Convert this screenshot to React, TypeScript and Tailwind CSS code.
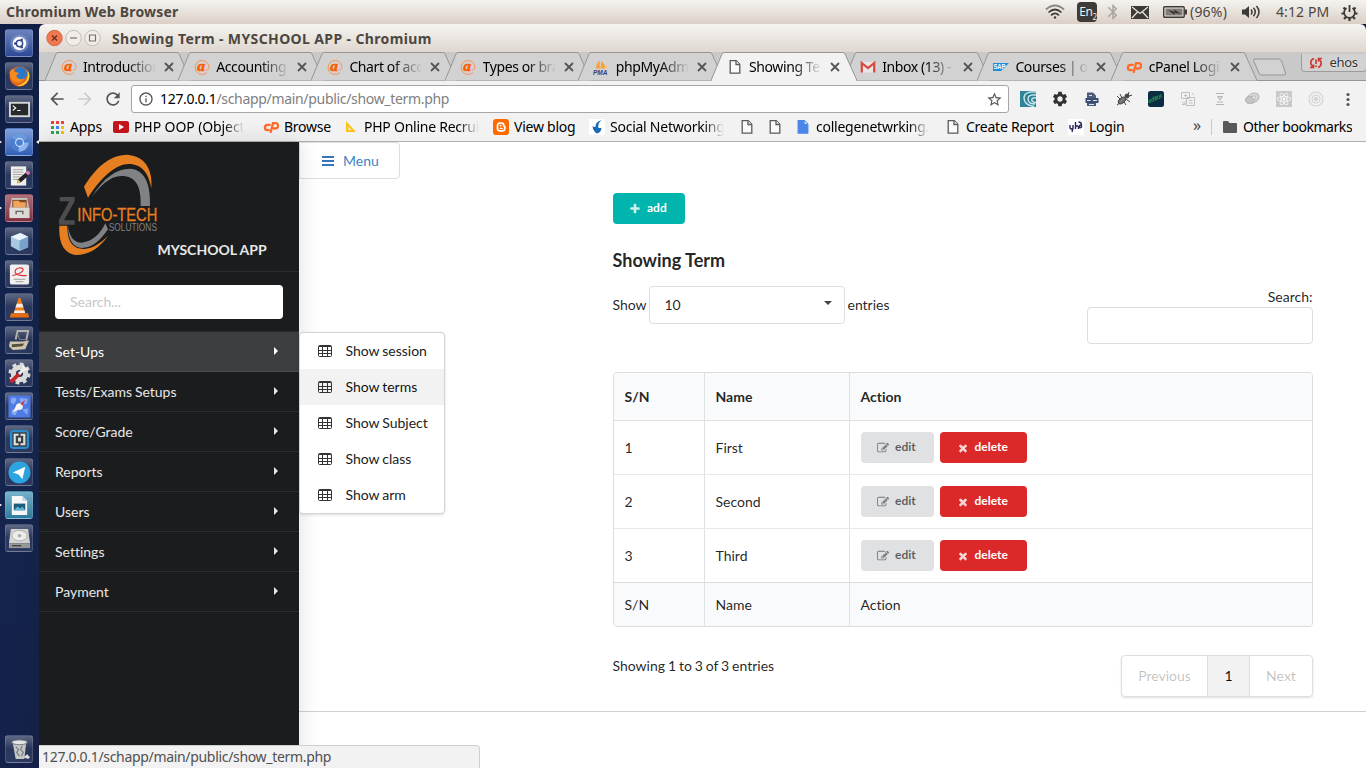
import React from "react";
import { FaReact } from "react-icons/fa";
import { MdBluetooth, MdStarBorder, MdRefresh, MdArrowBack, MdArrowForward, MdSettings, MdInfoOutline } from "react-icons/md";

const uiFont = "font-['Noto_Sans','Open_Sans',sans-serif]";

/* ---------- small icons ---------- */

function Fa({ d, className }: { d: string; className: string }) {
  return (
    <svg viewBox="0 0 1792 1792" fill="currentColor" className={className}>
      <path d={d} />
    </svg>
  );
}
const PLUS =
  "M1600 736v192q0 40-28 68t-68 28h-416v416q0 40-28 68t-68 28h-192q-40 0-68-28t-28-68v-416h-416q-40 0-68-28t-28-68v-192q0-40 28-68t68-28h416v-416q0-40 28-68t68-28h192q40 0 68 28t28 68v416h416q40 0 68 28t28 68z";
const CLOSE =
  "M1490 1322q0 40-28 68l-136 136q-28 28-68 28t-68-28l-294-294-294 294q-28 28-68 28t-68-28l-136-136q-28-28-28-68t28-68l294-294-294-294q-28-28-28-68t28-68l136-136q28-28 68-28t68 28l294 294 294-294q28-28 68-28t68 28l136 136q28 28 28 68t-28 68l-294 294 294 294q28 28 28 68z";
const EDIT =
  "M888 1184l116-116-152-152-116 116v56h96v96h56zm440-720q-16-16-33 1l-350 350q-17 17-1 33t33-1l350-350q17-17 1-33zm80 594v190q0 119-84.5 203.5t-203.5 84.5h-832q-119 0-203.5-84.5t-84.5-203.5v-832q0-119 84.5-203.5t203.5-84.5h832q63 0 117 25 15 7 18 23 3 17-9 29l-49 49q-14 14-32 8-23-6-45-6h-832q-66 0-113 47t-47 113v832q0 66 47 113t113 47h832q66 0 113-47t47-113v-126q0-13 9-22l64-64q15-15 35-7t20 29zm-96-738l288 288-672 672h-288v-288zm444 132l-92 92-288-288 92-92q28-28 68-28t68 28l152 152q28 28 28 68t-28 68z";

function TableIcon() {
  return (
    <svg viewBox="0 0 14 12" className="h-3 w-3.5 shrink-0" fill="none" stroke="#333" strokeWidth="1">
      <rect x=".5" y=".5" width="13" height="11" rx="1" />
      <path d="M1 1.500h12M1 5.500h12M1 8.500h12M4.500 2v9.500M9.500 2v9.500" />
    </svg>
  );
}

function AtIcon() {
  return (
    <svg viewBox="0 0 16 16" className="h-4 w-4">
      <path d="M12.800 13.600A7 7 0 1 1 15 7.500c.1 2.200-1.200 3.900-3.200 3.500" fill="none" stroke="#f7935a" strokeWidth="1" />
      <text x="3.300" y="11.700" fontFamily="Liberation Serif, serif" fontStyle="italic" fontWeight="700" fontSize="15.500" fill="#ff5c00" stroke="#ff5c00" strokeWidth=".6">a</text>
    </svg>
  );
}

function CpIcon() {
  return (
    <svg viewBox="0 0 16 12" className="h-3 w-4" fill="none" stroke="#ff6c2c" strokeWidth="2.300" strokeLinecap="round">
      <path d="M6.800 3.800H4.600a2.700 2.700 0 0 0 0 5.400h1.200" />
      <path d="M7.800 11 10 2.200h2.300a2.600 2.600 0 0 1 .2 5.300H10.800" />
    </svg>
  );
}

function SapIcon() {
  return (
    <svg viewBox="0 0 16 8" className="h-2 w-4">
      <path d="M0 0h16L8 8H0z" fill="#1f8fdc" />
      <text x=".4" y="6.400" fontFamily="Liberation Sans, sans-serif" fontWeight="700" fontSize="6.500" fill="#fff" textLength="12" lengthAdjust="spacingAndGlyphs">SAP</text>
    </svg>
  );
}

function DocIcon({ fill = "#fbfbfb", stroke = "#5a5a5a" }: { fill?: string; stroke?: string }) {
  return (
    <svg viewBox="0 0 12 16" className="h-4 w-3" fill={fill} stroke={stroke} strokeWidth="1.300">
      <path d="M1.200 1.700h6l3.600 3.600v8.900H1.200z" />
      <path d="M7 1.700v3.800h3.800" fill="#fff" />
    </svg>
  );
}

function GmailIcon() {
  return (
    <svg viewBox="0 0 16 16" className="h-4 w-4">
      <path d="M1 3h14v10.500H1z" fill="#e9e6e6" />
      <path d="M1.800 13.500V4L8 9l6.200-5v9.500" fill="none" stroke="#d8473b" strokeWidth="2.200" />
    </svg>
  );
}

function PmaIcon() {
  return (
    <svg viewBox="0 0 16 16" className="h-4 w-4">
      <path d="M7 9.500 6.500 1Q3 5 2.500 9.500zM7.500 9.500l.8-7.500Q12 5 12.500 9.500z" fill="#f9a13a" />
      <path d="M13 9.500 12 5q2 2 3 4.500z" fill="#fbc47f" />
      <text x="0" y="15.800" fontFamily="Liberation Sans, sans-serif" fontWeight="700" fontStyle="italic" fontSize="6.500" fill="#3b3f76">PMA</text>
    </svg>
  );
}

function BloggerIcon() {
  return (
    <svg viewBox="0 0 16 16" className="h-4 w-4">
      <rect width="16" height="16" rx="3" fill="#ff6a00" />
      <path d="M4.500 6.500q0-2.300 2.300-2.300h1.700q2.300 0 2.300 2.300 0 1 1 1v2q0 2.400-2.500 2.400H6.800q-2.300 0-2.300-2.300z" fill="none" stroke="#fff" strokeWidth="1.700" />
      <path d="M6.700 6.700h2M6.700 9.400h3" stroke="#fff" strokeWidth="1.300" />
    </svg>
  );
}

/* ---------- desktop: top panel ---------- */

function TopPanel() {
  return (
    <header className={`flex h-6 shrink-0 items-center bg-gradient-to-b from-[#f5f3f0] to-[#dacfc6] pl-1.5 text-[#4c4740] ${uiFont}`}>
      <span className="w-[1039px] whitespace-nowrap pb-px text-[14px] font-bold tracking-[0.2px]">Chromium Web Browser</span>
      <svg viewBox="0 0 20 16" className="h-4 w-5" fill="none" strokeWidth="1.700">
        <path d="M1 5.500q9-8 18 0" stroke="#8b867f" />
        <path d="M3.500 8.500q6.500-6 13 0M6 11.300q4-4 8 0" stroke="#403d38" />
        <circle cx="10" cy="13.500" r="1.200" fill="#403d38" />
      </svg>
      <span className="ml-3 flex h-5 w-5 items-center justify-center rounded-sm bg-[#3c3b37] text-[12px] leading-none tracking-[-0.4px] text-[#eee]">
        En<span className="-mr-0.5 self-end pb-px text-[8px] leading-none">2</span>
      </span>
      <MdBluetooth className="ml-[7px] h-[18px] w-[18px] text-[#aaa59f]" />
      <svg viewBox="0 0 18 13" className="ml-[9px] h-[13px] w-[18px]">
        <path d="M0 0h18v13H0z" fill="#3c3b37" />
        <path d="m1 1 8 6.500L17 1M1 12l5.500-6M17 12l-5.500-6" fill="none" stroke="#e8e2dc" strokeWidth="1.300" />
      </svg>
      <svg viewBox="0 0 24 12" className="ml-3.5 h-3 w-6">
        <rect x=".7" y=".7" width="20.500" height="10.600" rx="1" fill="none" stroke="#3c3b37" strokeWidth="1.400" />
        <path d="M2.500 2.500h17v7h-17z" fill="#817d78" />
        <path d="m5 4 7 2-1-2.500 7 4.500-7-1.500 1 2.500z" fill="#2b2a27" />
        <path d="M22 3.500h2v5h-2z" fill="#3c3b37" />
      </svg>
      <span className="ml-[3px] w-[51px] whitespace-nowrap pb-px text-[14px] tracking-[0.2px]">(96%)</span>
      <svg viewBox="0 0 20 16" className="h-4 w-5" fill="none" stroke="#3c3b37" strokeWidth="1.500">
        <path d="M1 5.500h3L8 2v12l-4-3.500H1z" fill="#3c3b37" stroke="none" />
        <path d="M10 5.500q2 2.500 0 5M12.500 3.800q3.500 4.200 0 8.400M15.500 2q5 6 0 12" />
      </svg>
      <span className="ml-[15px] w-[65px] whitespace-nowrap pb-px text-[14px] tracking-[0.1px]">4:12 PM</span>
      <svg viewBox="0 0 17 17" className="h-[17px] w-[17px]" fill="none" stroke="#3c3b37">
        <path d="M5.500 4A5.400 5.400 0 1 0 11.500 4" strokeWidth="1.800" />
        <path d="M8.500 1v7" strokeWidth="1.800" />
        <path d="M.5 9.500h3M13.500 9.500h3M3 15l2-2M14 15l-2-2M8.500 14v3M2.500 3.500l2 2M14.500 3.500l-2 2" strokeWidth="2.200" />
      </svg>
    </header>
  );
}

/* ---------- desktop: launcher ---------- */

function Tile({ bg, children, left, right }: { bg: string; children: React.ReactNode; left?: boolean; right?: boolean }) {
  return (
    <div className="relative flex h-7 w-full justify-center">
      {left && <span className="absolute -left-px top-3 h-0 w-0 border-y-[2px] border-l-[3px] border-y-transparent border-l-white" />}
      {right && <span className="absolute -right-px top-3 h-0 w-0 border-y-[2px] border-r-[3px] border-y-transparent border-r-white" />}
      <div className={`flex h-7 w-7 items-center justify-center rounded-[3px] border border-white/15 bg-gradient-to-b ${bg}`}>
        <svg viewBox="0 0 24 24" className="h-[23px] w-[23px]">
          {children}
        </svg>
      </div>
    </div>
  );
}

const navy = "from-[#5f6985] via-[#2b375c] to-[#2c3a63]";

function Launcher() {
  return (
    <aside className="flex w-[39px] shrink-0 flex-col gap-[5px] bg-gradient-to-b from-[#0f1d42] via-[#14264f] to-[#15214a] pt-[5px] pr-px">
      <Tile bg="from-[#6d82bd] to-[#2e4a97]">
        <circle cx="12" cy="12" r="9.500" fill="#8fa2d4" opacity=".5" />
        <circle cx="12" cy="12" r="7" fill="#fff" />
        <circle cx="12" cy="12" r="3.300" fill="none" stroke="#31498c" strokeWidth="1.500" />
        <circle cx="7.500" cy="12" r="1.300" fill="#31498c" />
        <circle cx="14.300" cy="8" r="1.300" fill="#31498c" />
        <circle cx="14.300" cy="16" r="1.300" fill="#31498c" />
      </Tile>
      <Tile bg={navy}>
        <circle cx="12" cy="12" r="10.500" fill="#e8641b" />
        <circle cx="13" cy="9" r="7" fill="#2f77c4" />
        <path d="M1.500 8q1.500-4 4.500-4 0 3 2 3.500 4 0 3 2-3 1-2 3 4 4 8 1-2 5-7 5-7-1-8.500-10.500z" fill="#f58a1f" />
        <path d="M20 5q4.500 6 .5 12-4 6-11 5 10-3 11-10 .5-4-.5-7z" fill="#fcd32c" />
      </Tile>
      <Tile bg={navy}>
        <path d="M1 4h22v16H1z" fill="#d5d5d5" />
        <path d="M3 6h18v12H3z" fill="#262a2c" />
        <path d="m5 8 3 2.500L5 13M9.500 13H13" fill="none" stroke="#fff" strokeWidth="1.200" />
      </Tile>
      <Tile bg="from-[#7fa0dc] to-[#3260b8]" left right>
        <circle cx="12" cy="12" r="9.500" fill="#4d7fd0" />
        <path d="M12 12 3.800 7A9.500 9.500 0 0 1 20.500 8z" fill="#6c9ae0" />
        <path d="M12 12h9.500A9.500 9.500 0 0 1 11 21.500z" fill="#8db6f0" />
        <circle cx="12" cy="12" r="4.600" fill="#dbe8fb" />
        <circle cx="12" cy="12" r="3.500" fill="#4b80d6" />
      </Tile>
      <Tile bg={navy}>
        <path d="M3 2.500h16v20H3z" fill="#f0f0ee" />
        <path d="M5 6h11M5 8.500h11M5 11h10M5 13.500h8M5 16h6" stroke="#a0a0a0" />
        <path d="m9.500 20 1-4 9-8 3 3-9 8z" fill="#222" />
        <path d="m18 9 2-2q3 0 3 3l-2 2z" fill="#d77bb9" />
        <path d="m9.500 20 1-4 3 3z" fill="#e7c36a" />
      </Tile>
      <Tile bg="from-[#b0727c] to-[#832f40]" left>
        <path d="M4 1h16l2 10H2z" fill="#c9c7c2" />
        <path d="M4.500 3h15v8h-15z" fill="#7b4a27" />
        <path d="M5.500 4h6l1 1.500h6V11h-13z" fill="#f3a45b" />
        <path d="M1.500 11h21v11h-21z" fill="#dddcd8" />
        <path d="M8.500 18v-3h7v3" fill="none" stroke="#666" strokeWidth="1.500" />
      </Tile>
      <Tile bg={navy}>
        <path d="m3 7 10-4 8 4v11l-9 4-9-5z" fill="#a9c9e2" />
        <path d="m3 7 10-4 8 4-9 4z" fill="#eaf5fb" />
        <path d="M12 11v11l9-4V7z" fill="#7ba4cb" />
      </Tile>
      <Tile bg={navy}>
        <rect x="2" y="1.500" width="20" height="21" rx="2" fill="#f1f1f1" />
        <path d="M4.500 13q8-1 11-5 1-3-3-3-6 1-5 5 2 4 12 3" fill="none" stroke="#dd2f38" strokeWidth="1.200" />
        <path d="M6 17h12M8 19.500h8" stroke="#999" strokeWidth="1" />
      </Tile>
      <Tile bg={navy}>
        <path d="M11 2h2l5 16H6z" fill="#f27d16" />
        <path d="M9.200 8h5.600l1.400 4H7.800z" fill="#eee" />
        <path d="M6.800 15h10.400l.8 3H6z" fill="#eee" />
        <path d="M3 18h18l1 4.500H2z" fill="#e86d0d" />
      </Tile>
      <Tile bg={navy}>
        <path d="M8 11 10 2h11l-2 10" fill="none" stroke="#b5b5b0" strokeWidth="2" />
        <path d="m10 5 2 6h7" fill="none" stroke="#888" />
        <path d="M2 13h13l7-1-4 9-13 1-4-4z" fill="#cfc7ae" />
        <path d="m4 16 13-1-2 3-11 1z" fill="#54503f" />
      </Tile>
      <Tile bg={navy}>
        <circle cx="12" cy="12" r="6.500" fill="none" stroke="#dcdcda" strokeWidth="5.500" />
        <circle cx="12" cy="12" r="10" fill="none" stroke="#dcdcda" strokeWidth="3" strokeDasharray="4 3.850" />
        <path d="m4 20 8-8" stroke="#c8242b" strokeWidth="4" strokeLinecap="round" />
        <path d="m11.500 12.500 6-6" stroke="#f2f2f2" strokeWidth="3" />
        <path d="M16 3q-1 5 5 5" fill="none" stroke="#f2f2f2" strokeWidth="2.500" />
      </Tile>
      <Tile bg={navy}>
        <path d="M.5.500h23v23H.5z" fill="#4f7be6" />
        <path d="M3 4q4-3 6 1l-3 5-3-2zM12 3l9 1-2 6-6-2zM4 15l6 1-2 5-4-1zM15 15l6-1-1 7z" fill="#87a9f3" />
        <path d="m5 18 4-8 5 4z" fill="#f3f3f3" />
        <circle cx="12" cy="12" r="3.500" fill="#f5f5f5" />
        <path d="m13 9 5-4-3 6z" fill="#e02b3c" />
      </Tile>
      <Tile bg={navy}>
        <rect x="2" y="2" width="20" height="20" rx="4" fill="#2a8fd0" />
        <path d="M4.500 4.500h15v15h-15z" fill="#3c3f43" />
        <path d="M7 7h10v10H7z" fill="none" stroke="#e4e4e4" strokeWidth="2.200" />
        <path d="M12 5.500v3M12 15.500v3" stroke="#3c3f43" strokeWidth="2" />
        <path d="M10.500 10h3v4h-3z" fill="#e4e4e4" />
      </Tile>
      <Tile bg={navy}>
        <circle cx="12" cy="12" r="11.500" fill="#2ca5e0" />
        <path d="m5 12 13-6-3 13-4-5z" fill="#fff" />
      </Tile>
      <Tile bg="from-[#79b3cf] to-[#2c7c9f]" left>
        <path d="M4 2h11l5 5v15H4z" fill="#f7f7f7" />
        <path d="M15 2v5h5z" fill="#bcd6e0" />
        <path d="M6 10h12v7H6z" fill="#1e5c7b" />
        <path d="m6 17 4-4 3 2 2-2 3 4z" fill="#59b6d3" />
      </Tile>
      <Tile bg={navy}>
        <path d="M3 2h18l2 15H1z" fill="#d4d4d2" />
        <ellipse cx="12" cy="9" rx="8" ry="5.500" fill="#ececeb" stroke="#adadab" />
        <circle cx="12" cy="9" r="1.800" fill="#aaa" />
        <path d="M1 17h22v5H1z" fill="#9a9a98" />
        <path d="M4 19.500h10" stroke="#444" strokeWidth="1.500" />
      </Tile>
      <div className="mt-auto pb-[5px]">
        <Tile bg={navy}>
          <path d="M5 5h14l-2 17H8z" fill="#c6c9c9" />
          <ellipse cx="12" cy="4.500" rx="8" ry="2.500" fill="#e5e6e6" stroke="#777" />
          <path d="m8 9 3 3-2 3 3 4M15 8l-2 4 3 3-2 4" fill="none" stroke="#7c8080" strokeWidth="1.300" />
          <path d="m16 20 4-3 3 3-2 2z" fill="#ddd" />
        </Tile>
      </div>
    </aside>
  );
}

/* ---------- browser chrome ---------- */

function TitleBar() {
  return (
    <div className={`flex h-7 items-center rounded-t-md bg-gradient-to-b from-[#f6f4f1] to-[#dfd7d0] pl-[7px] ${uiFont}`}>
      <svg viewBox="0 0 56 18" className="h-[18px] w-14" fill="none">
        <circle cx="8.500" cy="9" r="7.700" fill="#f1774f" stroke="#cf6a49" />
        <path d="m6 6.500 5 5m0-5-5 5" stroke="#5d3021" strokeWidth="1.200" />
        <circle cx="27.500" cy="9" r="7.700" fill="#f1eeea" stroke="#c4bdb5" />
        <path d="M24 9h7" stroke="#76716b" strokeWidth="1.200" />
        <circle cx="46.500" cy="9" r="7.700" fill="#f1eeea" stroke="#c4bdb5" />
        <path d="M43.500 6h6v6h-6z" stroke="#76716b" strokeWidth="1.200" />
      </svg>
      <span className="ml-[10px] whitespace-nowrap text-[14px] font-bold tracking-[0.38px] text-[#4c4740]">
        Showing Term - MYSCHOOL APP - Chromium
      </span>
    </div>
  );
}

type TabInfo = { title: string; icon: React.ReactNode; active?: boolean };

const tabs: TabInfo[] = [
  { title: "Introduction", icon: <AtIcon /> },
  { title: "Accounting", icon: <AtIcon /> },
  { title: "Chart of acc", icon: <AtIcon /> },
  { title: "Types or bra", icon: <AtIcon /> },
  { title: "phpMyAdm", icon: <PmaIcon /> },
  { title: "Showing Te", icon: <DocIcon />, active: true },
  { title: "Inbox (13) -", icon: <GmailIcon /> },
  { title: "Courses | op", icon: <SapIcon /> },
  { title: "cPanel Logi", icon: <CpIcon /> },
];

const fade = "[mask-image:linear-gradient(to_right,#000_60%,transparent)]";

function Tab({ title, icon, active }: TabInfo) {
  return (
    <div className={`relative -mr-[12.8px] flex h-[29px] w-[146px] shrink-0 items-center pl-[15px] ${active ? "z-10" : ""}`}>
      <svg viewBox="0 0 146 29" className="absolute inset-0 h-[29px] w-[146px]">
        <path
          d="M0 28.500 11 2Q11.500.500 13 .500H132Q133.500.500 134 2L146 28.500"
          fill={active ? "#f2f2f2" : "#d2d2d2"}
          stroke="#969696"
        />
        {active && <path d="M1 28.500h144" stroke="#f2f2f2" strokeWidth="1.500" />}
      </svg>
      <span className="relative flex w-[17px] justify-center">{icon}</span>
      <span className={`relative ml-[6px] w-[73px] overflow-hidden whitespace-nowrap pb-px text-[14px] tracking-[-0.4px] text-black ${fade}`}>{title}</span>
      <svg viewBox="0 0 10 10" className="relative ml-2 h-2.5 w-2.5" stroke="#555" strokeWidth="1.800">
        <path d="m1 1 8 8m0-8L1 9" />
      </svg>
    </div>
  );
}

function TabStrip() {
  return (
    <div className={`relative flex h-[29px] items-center bg-[#c9c9c9] pl-1.5 shadow-[inset_0_-1px_0_#969696] ${uiFont}`}>
      {tabs.map((t) => (
        <Tab key={t.title} {...t} />
      ))}
      <svg viewBox="0 0 34 18" className="ml-[22.800px] h-[18px] w-[34px] shrink-0 translate-x-[-14px]" fill="#d2d2d2" stroke="#969696">
        <path d="M1.500 1h24q2 0 3 2l4 12q.500 2-1.500 2H9q-2 0-3-2L.800 3q-.500-2 1-2z" />
      </svg>
      <div className="mr-1.5 mb-[9px] ml-auto flex h-[18px] w-[66px] shrink-0 items-center justify-center gap-1.5 self-end rounded-b border border-t-0 border-[#9c9c9c] bg-[#d2d2d2]">
        <svg viewBox="0 0 14 12" className="h-3 w-3.5" fill="none" stroke="#d03a30" strokeWidth="1.700">
          <path d="M5 1.500Q1 3 2 7l2 3.500M9 10.500q4-1.500 3-5.500L10 1.500M1 10.500h3.500V7.500M13 1.500H9.500v3" />
          <path d="M7 2.500v4.500M7 8.500v1.500" />
        </svg>
        <span className="text-[13px] leading-none tracking-[-0.3px] text-[#333] [text-shadow:0_0_2px_#fff]">ehos</span>
      </div>
    </div>
  );
}

function Extensions() {
  return (
    <div className="flex items-center pl-[11px]">
      <svg viewBox="0 0 16 16" className="h-4 w-4">
        <path d="M0 0h16v16H0z" fill="#2f8597" />
        <path d="M16 1Q4 0 4 7t10 8.500M16 4Q8 3 8 8t7 5M16 7q-5-1-4 3 1 1 4 2" fill="none" stroke="#d8eef2" strokeWidth="1.300" />
      </svg>
      <MdSettings className="ml-[15px] h-[18px] w-[18px] text-[#333]" />
      <svg viewBox="0 0 16 16" className="ml-[15px] h-4 w-4">
        <path d="M3 1.500h6l3 3V15H3z" fill="#4b5b7c" />
        <path d="M1.500 7h13v5h-13z" fill="#3c4c70" />
        <path d="M3 9.500h3.500M9 9.500h4M5 4.500h3M5 13.500h5" stroke="#dfe5f0" strokeWidth="1.200" />
      </svg>
      <svg viewBox="0 0 16 16" className="ml-4 h-4 w-4" fill="#777" stroke="#444">
        <ellipse cx="6" cy="9.500" rx="4.200" ry="2.500" transform="rotate(-40 6 9.500)" />
        <circle cx="11" cy="5" r="2" fill="#444" />
        <path d="m4 8-3-3m5 2L4 3m4 8 2 3m0-6 4 3m-2-7 1-3m0 4 3-1M4 12l-3 2" fill="none" />
      </svg>
      <svg viewBox="0 0 16 16" className="ml-4 h-4 w-4">
        <rect width="16" height="16" rx="2.500" fill="#0c2c44" />
        <text x="1" y="12" fontSize="6" fontStyle="italic" fontFamily="Liberation Sans, sans-serif" fill="#39c24f" transform="rotate(-25 2 12)">editor</text>
      </svg>
      <svg viewBox="0 0 16 16" className="ml-4 h-4 w-4" fill="#f2f2f2" stroke="#c0c0c0">
        <path d="M1.500 1.500h8v6h-8zM6.500 6.500h8v8h-8z" />
        <path d="M4 4.500h3M5.500 3v3M9 9.500h3.500M9 12h3.500M2 10.500l3 3m0-3v3H2M12 2l2 2" />
      </svg>
      <svg viewBox="0 0 16 16" className="ml-4 h-4 w-4" fill="#ddd" stroke="#b5b5b5">
        <path d="M4 2.500h8M4 13.500h8M5.500 5.500h5l-2.500 3.500z" />
        <path d="M5 11h6" />
      </svg>
      <svg viewBox="0 0 16 16" className="ml-4 h-4 w-4" fill="#d8d8d8" stroke="#b5b5b5">
        <ellipse cx="9" cy="7" rx="6.300" ry="4.500" transform="rotate(-25 9 7)" />
        <ellipse cx="6" cy="9" rx="4.500" ry="3.500" fill="#c4c4c4" />
        <circle cx="10" cy="6.500" r="1.700" fill="#eee" />
      </svg>
      <span className="ml-4 flex h-4 w-4 items-center justify-center bg-[#c9c9c9]">
        <FaReact className="h-3.5 w-3.5 text-white" />
      </span>
      <svg viewBox="0 0 16 16" className="ml-4 h-4 w-4" fill="none" stroke="#d3d3d3" strokeWidth="1.200">
        <circle cx="8" cy="8" r="7" />
        <circle cx="8" cy="8" r="4" />
        <circle cx="8" cy="8" r="1.500" fill="#cfcfcf" />
      </svg>
      <svg viewBox="0 0 16 16" className="ml-4 h-4 w-4" fill="#555">
        <circle cx="8" cy="3.500" r="1.600" />
        <circle cx="8" cy="8.500" r="1.600" />
        <circle cx="8" cy="13.500" r="1.600" />
      </svg>
    </div>
  );
}

function Toolbar() {
  return (
    <div className={`flex h-9 items-center bg-[#f2f2f2] pl-2 ${uiFont}`}>
      <MdArrowBack className="h-5 w-5 text-[#555]" />
      <MdArrowForward className="ml-2 h-5 w-5 text-[#ccc]" />
      <MdRefresh className="ml-2 h-5 w-5 text-[#555]" />
      <div className="ml-2 flex h-7 w-[878px] items-center rounded-[3px] border border-[#a6a6a6] bg-white pl-1.5">
        <MdInfoOutline className="h-4 w-4 text-[#555]" />
        <span className="ml-1.5 whitespace-nowrap pb-px text-[14px] tracking-[-0.32px] text-[#808080]">
          <span className="text-black">127.0.0.1</span>/schapp/main/public/show_term.php
        </span>
        <MdStarBorder className="mr-[5px] ml-auto h-[17px] w-[17px] text-[#555]" />
      </div>
      <Extensions />
    </div>
  );
}

function Mark({ icon, label, className, faded }: { icon: React.ReactNode; label?: string; className: string; faded?: boolean }) {
  return (
    <div className={`flex shrink-0 items-center gap-[5px] ${className}`}>
      <span className="flex h-4 w-4 shrink-0 items-center justify-center">{icon}</span>
      {label && (
        <span className={`overflow-hidden whitespace-nowrap pb-0.5 ${faded ? "[mask-image:linear-gradient(to_right,#000_82%,transparent)]" : ""}`}>{label}</span>
      )}
    </div>
  );
}

function Bookmarks() {
  return (
    <div className={`flex h-[25px] items-center border-b border-[#b0b0b0] bg-[#f2f2f2] pb-1 pl-[10px] text-[14px] tracking-[-0.25px] text-black ${uiFont}`}>
      <Mark
        className="w-[64px]"
        label="Apps"
        icon={
          <svg viewBox="0 0 13 13" className="h-[13px] w-[13px]">
            <path d="M0 0h3v3H0zM5 0h3v3H5zM10 0h3v3h-3z" fill="#ea4335" />
            <path d="M0 5h3v3H0zM0 10h3v3H0zM5 10h3v3H5z" fill="#34a05a" />
            <path d="M5 5h3v3H5z" fill="#4285f4" />
            <path d="M10 5h3v3h-3zM10 10h3v3h-3z" fill="#fbbc05" />
          </svg>
        }
      />
      <Mark
        className="w-[134px] tracking-[-0.1px]"
        label="PHP OOP (Object"
        faded
        icon={
          <svg viewBox="0 0 16 12" className="h-3 w-4">
            <rect width="16" height="12" rx="2" fill="#c4161c" />
            <path d="m6 3 5 3-5 3z" fill="#fff" />
          </svg>
        }
      />
      <Mark className="ml-4 w-[68px]" label="Browse" icon={<CpIcon />} />
      <Mark
        className="ml-[12px] w-[138px]"
        label="PHP Online Recrui"
        faded
        icon={
          <svg viewBox="0 0 12 12" className="h-3 w-3">
            <path d="M1 0v11h10zM3.500 6l3 3h-3z" fill="#fbc21c" fillRule="evenodd" />
          </svg>
        }
      />
      <Mark className="ml-[12px] w-[85px]" label="View blog" icon={<BloggerIcon />} />
      <Mark
        className="ml-[11px] w-[135px]"
        label="Social Networking"
        faded
        icon={
          <svg viewBox="0 0 16 16" className="h-4 w-4">
            <path d="M0 0h16v16H0z" fill="#fff" />
            <path d="M12.500 1Q6 3 6.500 8L3.500 7.500Q4 12 8 14.500q4-1 4.500-5.500L9.500 9Q8.500 4 12.500 1z" fill="#1769b3" />
          </svg>
        }
      />
      <Mark className="ml-[15px] w-4" icon={<DocIcon />} />
      <Mark className="ml-3 w-4" icon={<DocIcon />} />
      <Mark className="ml-3 w-[135px]" label="collegenetwrking." faded icon={<DocIcon fill="#4a86e8" stroke="#4a86e8" />} />
      <Mark className="ml-[15px] w-[110px]" label="Create Report" icon={<DocIcon />} />
      <Mark
        className="ml-[13px] w-[57px]"
        label="Login"
        icon={
          <svg viewBox="0 0 16 16" className="h-4 w-4" fill="none" stroke="#2a2a5e" strokeWidth="1.400">
            <path d="M0 0h16v16H0z" fill="#fff" stroke="none" />
            <path d="M2 6v3q1.500 2 3 0V6m0 3-1 4M7.500 3v7m0-2q2-2.500 3 0v2M13.500 7q-2-2-2 .5t2 .5V6q0-3-3-3" />
          </svg>
        }
      />
      <span className="ml-[66px] w-[20px] pb-1 pl-0.5 text-[16px] leading-none text-[#444]">»</span>
      <span className="h-4 w-px bg-[#c8c8c8]" />
      <Mark
        className="ml-[10px] tracking-[-0.45px]"
        label="Other bookmarks"
        icon={
          <svg viewBox="0 0 14 12" className="h-3 w-3.5" fill="#595959">
            <path d="M0 1q0-1 1-1h4l1.500 2H13q1 0 1 1v8q0 1-1 1H1q-1 0-1-1z" />
          </svg>
        }
      />
    </div>
  );
}

/* ---------- web page ---------- */

function Logo() {
  return (
    <svg viewBox="60 42 300 306" className="h-[102px] w-[100px]">
      <path d="M138 140C170 88 212 44 268 44C325 48 345 95 340 145C332 100 312 72 272 72C235 72 192 108 150 173Z" fill="#e67e22" />
      <path d="M162 170C195 115 235 86 275 86C320 88 338 130 336 198H308C310 140 295 108 250 108C215 108 185 140 162 170Z" fill="#808285" />
      <path d="M64 257H88C88 300 100 325 138 327C165 325 190 308 210 287C185 325 150 345 115 345C75 340 62 305 64 257Z" fill="#e67e22" />
      <path d="M90 257C94 290 108 308 132 308C162 304 185 285 202 250L210 268C185 305 160 324 132 324C105 322 90 300 90 257Z" fill="#808285" />
      <path d="M65 171H110V184L78 241H110V254H63V240L94 184H65Z" fill="#4d4d4f" />
      <text x="118" y="244" fontFamily="Liberation Sans, sans-serif" fontSize="56" fill="#e67e22" stroke="#e67e22" strokeWidth="1" textLength="240" lengthAdjust="spacingAndGlyphs">INFO-TECH</text>
      <text x="212" y="273" fontFamily="Liberation Sans, sans-serif" fontSize="30" fill="#808285" textLength="145" lengthAdjust="spacingAndGlyphs">SOLUTIONS</text>
    </svg>
  );
}

const menu = ["Set-Ups", "Tests/Exams Setups", "Score/Grade", "Reports", "Users", "Settings", "Payment"];
const submenu = ["Show session", "Show terms", "Show Subject", "Show class", "Show arm"];

function Sidebar() {
  return (
    <nav className="relative z-10 w-[260px] shrink-0 bg-[#1b1c1d] text-[14px] text-white/90 shadow-[0_0_20px_rgba(34,36,38,0.15)]">
      <div className="flex h-[130px] items-end border-b border-white/[0.08] pb-[11px] pl-[19px]">
        <div className="pb-1">
          <Logo />
        </div>
        <span className="-ml-[0.5px] whitespace-nowrap font-bold [word-spacing:0]">MYSCHOOL APP</span>
      </div>
      <div className="flex h-[60px] items-center border-b border-white/[0.08] pt-px pl-4">
        <div className="flex h-[34px] w-[228px] items-center rounded bg-white pb-px pl-[15px] text-[#c8c8c8]">Search...</div>
      </div>
      {menu.map((m, i) => (
        <div key={m} className={`flex h-10 items-center justify-between border-b border-white/[0.08] pr-[21px] pl-4 ${i === 0 ? "bg-[#3d3e3f] text-white" : ""}`}>
          <span>{m}</span>
          <span className="mb-[2px] h-0 w-0 border-y-[4px] border-l-[4px] border-y-transparent border-l-current" />
        </div>
      ))}
      <div className="absolute top-[190px] left-[260px] w-[146px] rounded border border-[#d4d4d5] bg-white text-[#212121] shadow-[0_1px_3px_0_rgba(34,36,38,0.15)]">
        {submenu.map((s, i) => (
          <div key={s} className={`flex h-9 items-center pb-px pl-[18px] ${i === 1 ? "bg-[#f2f2f2] text-black/95" : ""}`}>
            <TableIcon />
            <span className="ml-[13.5px] pb-px whitespace-nowrap">{s}</span>
          </div>
        ))}
      </div>
    </nav>
  );
}

const rows = [
  ["1", "First"],
  ["2", "Second"],
  ["3", "Third"],
];

function DataTable() {
  const line = "border-l border-[#e0e1e2]";
  return (
    <div className="mt-7 h-[255px] overflow-hidden rounded border border-[#dbdcdd]">
      <div className="flex h-12 items-stretch border-b border-[#e0e1e2] bg-[#f9fafb] font-bold">
        <div className="flex w-[90px] items-center pl-[10.5px]">S/N</div>
        <div className={`flex w-[145px] items-center pl-[10.5px] ${line}`}>Name</div>
        <div className={`flex flex-1 items-center pl-[10.5px] ${line}`}>Action</div>
      </div>
      {rows.map(([n, name], i) => (
        <div key={n} className={`flex h-[54px] items-stretch border-b ${i === 2 ? "border-[#dbdcdd]" : "border-[#e9e9ea]"}`}>
          <div className="flex w-[90px] items-center pl-[10.5px]">{n}</div>
          <div className={`flex w-[145px] items-center pl-[10.5px] ${line}`}>{name}</div>
          <div className={`flex flex-1 items-center gap-1.5 pl-[11px] ${line}`}>
            <button className="flex h-[31px] w-[73px] items-center rounded bg-[#e0e1e2] pl-4 text-[12px] font-bold text-black/60">
              <Fa d={EDIT} className="h-3 w-3 opacity-80" />
              <span className="ml-1.5 pb-px">edit</span>
            </button>
            <button className="flex h-[31px] w-[87px] items-center rounded bg-[#db2828] pl-[17px] text-[12px] font-bold text-white">
              <Fa d={CLOSE} className="h-3 w-3 opacity-80" />
              <span className="ml-[5.5px] pb-px">delete</span>
            </button>
          </div>
        </div>
      ))}
      <div className="flex h-[43px] items-stretch bg-[#f9fafb]">
        <div className="flex w-[90px] items-center pl-[10.5px]">S/N</div>
        <div className={`flex w-[145px] items-center pl-[10.5px] ${line}`}>Name</div>
        <div className={`flex flex-1 items-center pl-[10.5px] ${line}`}>Action</div>
      </div>
    </div>
  );
}

function Content() {
  return (
    <main className="flex-1 text-[14px] text-black/87">
      <div className="flex h-[570px] items-start border-b border-[#d0d1d2]">
        <button className="flex h-[37px] w-[101px] items-center rounded-r border border-[#dededf] pl-[22px] text-[#4183c4]">
          <svg viewBox="0 0 12 10" className="h-2.5 w-3" fill="#3676b6">
            <path d="M0 0h12v2H0zM0 4h12v2H0zM0 8h12v2H0z" />
          </svg>
          <span className="ml-[9px]">Menu</span>
        </button>
        <section className="ml-[213px] w-[700px] pt-[51px]">
          <button className="flex h-[31px] w-[72px] items-center rounded bg-[#00b5ad] pl-4 text-[12px] font-bold text-white">
            <Fa d={PLUS} className="h-3 w-3 opacity-80" />
            <span className="ml-1.5 pb-px">add</span>
          </button>
          <h1 className="-ml-[0.5px] mt-[25px] text-[18px] leading-[23px] font-bold [word-spacing:0]">Showing Term</h1>
          <div className="mt-[14px] flex h-[58px] items-start justify-between">
            <div className="flex items-center">
              <span className="-ml-[0.5px] w-[36.5px] pb-0.5">Show</span>
              <div className="flex h-[38px] w-[196px] items-center justify-between rounded border border-[#dededf] pr-3 pl-[14.5px]">
                <span className="pb-0.5">10</span>
                <span className="mb-1 h-0 w-0 border-x-[4px] border-t-[4px] border-x-transparent border-t-[#444]" />
              </div>
              <span className="ml-[2.5px] pb-0.5">entries</span>
            </div>
            <label className="flex flex-col items-end">
              <span className="mr-[0.5px] leading-[21px]">Search:</span>
              <span className="h-[37px] w-[226px] rounded border border-[#dededf] bg-white" />
            </label>
          </div>
          <DataTable />
          <div className="mt-7 flex items-start justify-between">
            <span className="-ml-[0.5px] leading-[22px]">Showing 1 to 3 of 3 entries</span>
            <div className="flex h-[42px] w-[192px] overflow-hidden rounded border border-[#dededf] text-black/25 shadow-[0_1px_2px_0_rgba(34,36,38,0.15)]">
              <span className="flex w-[85px] items-center justify-center pb-px">Previous</span>
              <span className="flex w-[43px] items-center justify-center border-x border-[#dededf] bg-[#f2f2f2] pb-px text-black/95">1</span>
              <span className="flex flex-1 items-center justify-center pb-px">Next</span>
            </div>
          </div>
        </section>
      </div>
    </main>
  );
}

export default function App() {
  return (
    <div className="flex h-[768px] w-[1366px] flex-col overflow-hidden bg-[#101c3c]">
      <TopPanel />
      <div className="flex min-h-0 flex-1">
        <Launcher />
        <div className="relative flex min-w-0 flex-1 flex-col">
          <TitleBar />
          <TabStrip />
          <Toolbar />
          <Bookmarks />
          <div className="flex min-h-0 flex-1 bg-white font-['Lato',sans-serif] [font-variant-ligatures:none] [word-spacing:-0.7px]">
            <Sidebar />
            <Content />
          </div>
          <div className={`absolute bottom-0 left-0 z-20 flex h-[23px] w-[441px] items-center rounded-tr border border-b-0 border-l-0 border-[#cfcfcf] bg-[#f2f2f2] pb-px pl-[3px] text-[14px] tracking-[-0.32px] whitespace-nowrap text-[#505050] ${uiFont}`}>
            127.0.0.1/schapp/main/public/show_term.php
          </div>
        </div>
      </div>
    </div>
  );
}
